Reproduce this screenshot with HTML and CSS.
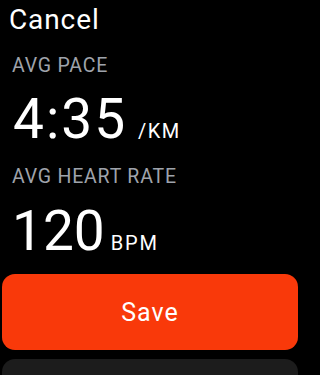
FILE: index.html
```html
<!DOCTYPE html>
<html lang="en">
<head>
<meta charset="utf-8">
<title>Workout summary</title>
<link rel="stylesheet" href="styles.css">
</head>
<body>
  <div class="screen">
    <div class="nav"><span class="cancel">Cancel</span></div>
    <div class="stats">
      <div class="label label-pace">AVG PACE</div>
      <div class="value value-pace"><span class="num num-pace">4:35</span><span class="unit unit-pace">/KM</span></div>
      <div class="label label-hr">AVG HEART RATE</div>
      <div class="value value-hr"><span class="num num-hr">120</span><span class="unit unit-hr">BPM</span></div>
    </div>
    <div class="actions">
      <button class="btn btn-save">Save</button>
      <button class="btn btn-dark"></button>
    </div>
  </div>
</body>
</html>
```
FILE: styles.css
```css
html, body {
  margin: 0;
  padding: 0;
  background: #000;
  height: 100%;
  overflow: hidden;
}
body {
  font-family: Roboto, "Liberation Sans", sans-serif;
  color: #fff;
}
.screen {
  width: 300px;
  height: 375px;
  overflow: hidden;
  display: flex;
  flex-direction: column;
}
.nav {
  padding: 4px 0 0 9px;
}
.cancel {
  font-size: 28px;
  line-height: 32px;
  letter-spacing: 0.9px;
  display: block;
}
.stats {
  display: flex;
  flex-direction: column;
  padding-left: 12px;
}
.label {
  font-size: 19.5px;
  line-height: 24px;
  color: #9fa3ab;
  letter-spacing: 0.8px;
}
.label-pace { margin-top: 18px; }
.label-hr { margin-top: 18px; }
.value {
  display: flex;
  align-items: baseline;
  height: 56px;
}
.value-pace { margin-top: 13px; margin-left: 1px; }
.value-hr { margin-top: 14px; margin-left: 0; }
.num {
  font-size: 55px;
  line-height: 56px;
}
.num-pace { letter-spacing: 2px; }
.num-hr { letter-spacing: 0; }
.unit {
  font-size: 20px;
  line-height: 24px;
  letter-spacing: 1.5px;
}
.unit-pace { margin-left: 11px; }
.unit-hr { margin-left: 6px; letter-spacing: 1.8px; }
.actions {
  display: flex;
  flex-direction: column;
  gap: 9px;
  padding: 15px 2px 0 2px;
}
.btn {
  border: none;
  border-radius: 13px;
  height: 76px;
  width: 100%;
  flex-shrink: 0;
  font-family: inherit;
  padding: 0;
}
.btn-save {
  background: #f9390a;
  color: #fff;
  font-size: 25px;
  letter-spacing: 1px;
}
.btn-dark {
  background: #1c1c1c;
}
```
